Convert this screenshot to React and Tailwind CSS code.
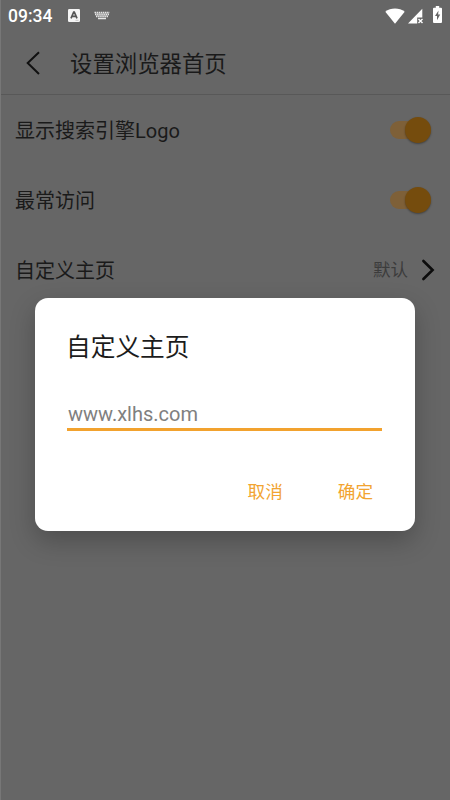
import { useState } from 'react'

export default function App() {
  const [showLogo, setShowLogo] = useState(true)
  const [mostVisited, setMostVisited] = useState(true)
  const [homepage, setHomepage] = useState('')

  return (
    <div className="relative h-[800px] w-[450px] overflow-hidden border-l border-[#777777] bg-[#666666] font-[Roboto,'Noto_Sans_CJK_SC',sans-serif] text-[#1a1a1a]">
      <StatusBar />

      {/* Toolbar */}
      <header className="flex h-[63px] items-center border-b border-[#585858] pl-6">
        <button aria-label="返回">
          <svg width="16" height="26" viewBox="0 0 16 26" fill="none" stroke="#101010" strokeWidth="2">
            <path d="M14 2.200 2.700 13 14 24" />
          </svg>
        </button>
        <h1 className="ml-[29px] pt-0.5 text-[22.4px] leading-8">设置浏览器首页</h1>
      </header>

      {/* Settings */}
      <main className="pl-[14px] pr-[15px]">
        <Row label="显示搜索引擎Logo">
          <Switch on={showLogo} onClick={() => setShowLogo(!showLogo)} />
        </Row>
        <Row label="最常访问">
          <Switch on={mostVisited} onClick={() => setMostVisited(!mostVisited)} />
        </Row>
        <Row label="自定义主页">
          <div className="flex items-center gap-[13px]">
            <span className="pt-px text-[17.5px] text-[#3c3c3c]">默认</span>
            <svg width="14" height="22" viewBox="0 0 14 22" fill="none" stroke="#0c0c0c" strokeWidth="2.6" strokeLinecap="round">
              <path d="M2.4 2 11.6 11 2.4 20" />
            </svg>
          </div>
        </Row>
      </main>

      {/* Dialog */}
      <div
        role="dialog"
        className="absolute left-[34px] top-[298px] flex h-[233px] w-[380px] flex-col rounded-[13px] bg-white px-8 shadow-[0_10px_26px_rgba(0,0,0,0.24)]"
      >
        <h2 className="-ml-px mt-8 text-[24.7px] leading-9 text-[#1c1c1c]">自定义主页</h2>
        <input
          value={homepage}
          onChange={(e) => setHomepage(e.target.value)}
          placeholder="www.xlhs.com"
          className="-mr-px mt-8 h-[33px] w-[315px] border-b-[3px] border-[#f2a22e] pt-0.5 pl-px text-[20px] outline-none placeholder:text-[#808080]"
        />
        <div className="mt-[47px] flex justify-end gap-[55px] pr-[10px] text-[17.6px] leading-7 text-[#f2a431]">
          <button>取消</button>
          <button>确定</button>
        </div>
      </div>
    </div>
  )
}

function StatusBar() {
  return (
    <div className="flex h-8 items-center pl-[7px] pr-2 text-white">
      <span className="pt-px text-[17.5px] font-medium leading-none">09:34</span>
      <svg className="mb-0.5 ml-[16px]" width="12" height="13" viewBox="0 0 12 13">
        <rect width="12" height="13" rx="1.2" fill="#f4f4f4" />
        <path d="M3 9.300 5.700 3h.6L9 9.300M4.200 7.400h3.600" fill="none" stroke="#555" strokeWidth="1.7" />
        <path d="M7.500 11.300h3" stroke="#bbb" strokeWidth=".8" />
      </svg>
      <svg className="mb-0.5 ml-[14px]" width="16" height="9" viewBox="0 0 16 9" stroke="#e6e6e6" fill="none">
        <path d="M.5 1.500h15M1 3.500h14M2 5.500h12" strokeWidth="1.3" strokeDasharray="1.5 .6" />
        <path d="M1 2.500h14M2 4.500h12" strokeWidth=".7" opacity=".5" />
        <path d="M4 7.500h8" strokeWidth="1.5" />
      </svg>
      <div className="ml-auto flex items-center">
        <svg width="20" height="16" viewBox="0 0 20 16" fill="#fff">
          <path d="M.3 3.700C5.600-.7 14.400-.7 19.700 3.700L10 15.700z" />
        </svg>
        <svg className="ml-[3px]" width="16" height="16" viewBox="0 0 16 16">
          <path d="M14.300.7v8.700H9.200v6H0z" fill="#fff" />
          <path d="m10.500 11 4 4m0-4-4 4" stroke="#fff" strokeWidth="1.4" />
        </svg>
        <svg className="mb-[3px] ml-[9px]" width="9" height="17" viewBox="0 0 9 17">
          <path d="M2.800 0h3.400v1.700H8q1 0 1 1V16q0 1-1 1H1q-1 0-1-1V2.700q0-1 1-1h1.800z" fill="#fff" />
          <path d="M5.500 4.500 2 10h2v4.300L7.200 8.500H5.100z" fill="#666" />
        </svg>
      </div>
    </div>
  )
}

function Row({ label, children }) {
  return (
    <div className="flex h-[70px] items-center justify-between">
      <span className="pt-px text-[20px]">{label}</span>
      {children}
    </div>
  )
}

function Switch({ on, onClick }) {
  return (
    <button
      role="switch"
      aria-checked={on}
      onClick={onClick}
      className={`mr-1 flex h-[18px] w-[41px] items-center rounded-full bg-[#7e6038] ${on ? 'justify-end' : 'justify-start'}`}
    >
      <span className="size-[26px] rounded-full bg-[#754c0d] shadow-[0_1px_2px_rgba(0,0,0,0.35)]" />
    </button>
  )
}
